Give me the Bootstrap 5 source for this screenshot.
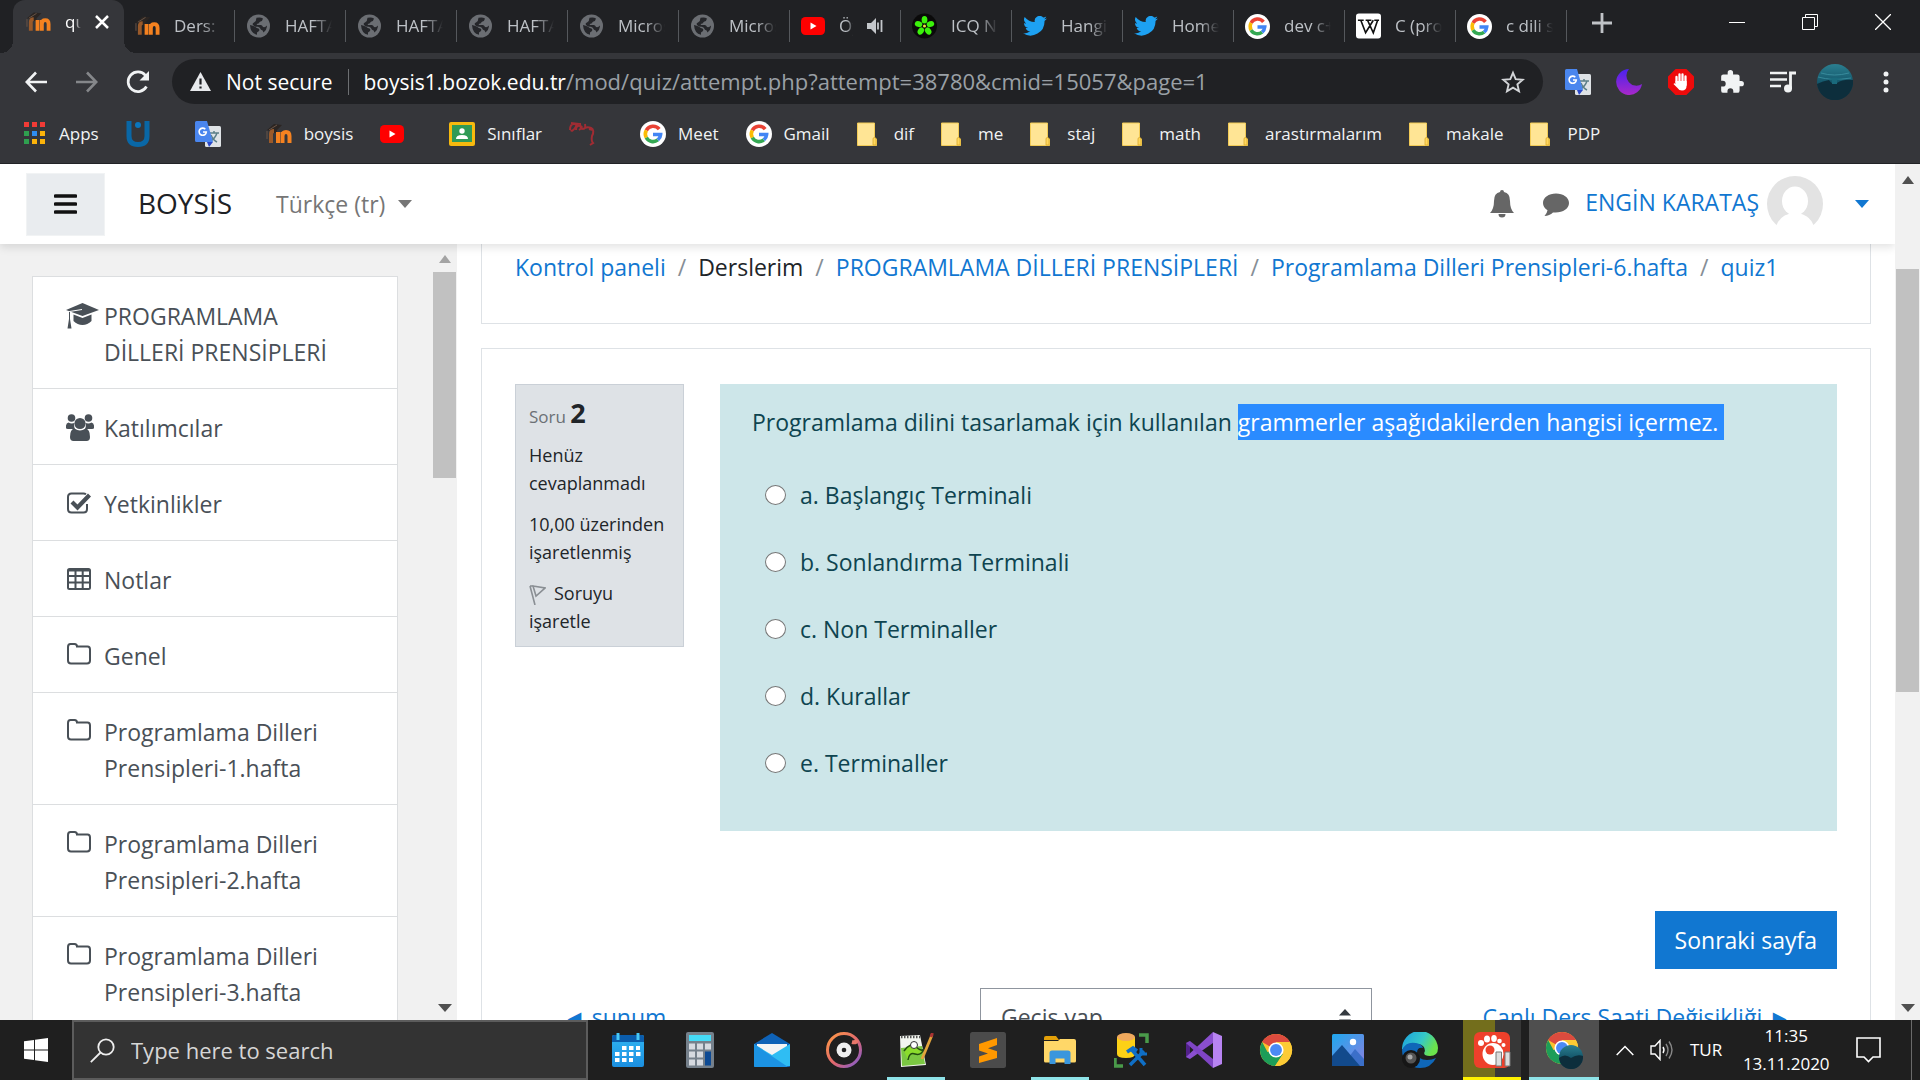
<!DOCTYPE html>
<html lang="tr">
<head>
<meta charset="utf-8">
<meta name="viewport" content="width=device-width, initial-scale=1">
<title>quiz1</title>
<link href="https://cdn.jsdelivr.net/npm/bootstrap@5.3.0/dist/css/bootstrap.min.css" rel="stylesheet">
<style>
:root { --ink:#373a3c; --link:#1177d1; --line:#dee2e6; --chrome:#35363a; --strip:#202124; }
body { font-family:"Open Sans","Noto Sans",sans-serif; font-size:23px; line-height:36px; color:#212529; }
a { text-decoration:none; color:var(--link); }
svg { display:block; flex:none; }
.plain { background:none; border:0; padding:0; color:inherit; display:flex; align-items:center; justify-content:center; }

/* browser tabs */
.tabstrip { height:53px; background:var(--strip); color:#bdc1c6; font-size:17px; line-height:24px; padding-left:13px; }
.tab-item { width:111px; height:32px; margin-top:10px; padding-left:11px; gap:14px; border-right:1px solid #55585c; color:inherit; }
.tab-text { width:47px; overflow:hidden; white-space:nowrap; -webkit-mask-image:linear-gradient(90deg,#000 60%,transparent); mask-image:linear-gradient(90deg,#000 60%,transparent); }
.tab-text.short { width:14px; }
.tab-current { position:relative; height:53px; margin:0; padding:0 12px 10px 13px; border:0; background:var(--chrome); border-radius:12px 12px 0 0; color:#fff; }
.tab-current .tab-text { width:16px; }
.tab-current::before, .tab-current::after { content:""; position:absolute; bottom:0; width:12px; height:12px; }
.tab-current::before { left:-12px; background:radial-gradient(circle at 0 0,transparent 12px,var(--chrome) 12px); }
.tab-current::after { right:-12px; background:radial-gradient(circle at 100% 0,transparent 12px,var(--chrome) 12px); }
.tab-new { width:38px; }
.win-buttons { width:220px; height:44px; color:#fff; }

/* address row */
.toolbar { height:57px; background:var(--chrome); color:#fff; padding-left:10px; }
.nav-btn { width:51px; height:40px; }
.omnibox { height:45px; margin:0 9px; padding:0 18px; border-radius:23px; background:var(--strip); font-size:21px; line-height:30px; gap:15px; white-space:nowrap; }
.omnibox .rule { width:1px; height:26px; background:#6d6f72; }
.omnibox .path { color:#9aa0a6; font-size:22px; }
.ext-group { width:360px; margin-right:8px; }
.ext-group .plain { flex:1 1 0; }

/* bookmarks */
.bookmarks { height:54px; background:var(--chrome); border-bottom:1px solid #222326; font-size:17px; line-height:24px; padding:0 0 6px 23px; gap:27px; }
.bookmarks a { color:#f1f3f4; gap:12px; white-space:nowrap; }
.bookmarks .only-icon { padding-right:18px; }

/* site header */
.site-header { position:relative; z-index:2; height:80px; background:#fff; box-shadow:0 3px 9px rgba(0,0,0,.12); padding:0 26px; }
.menu-btn { width:79px; height:63px; background:#e9ecef; border:1px solid #f1f3f4; border-radius:0; padding:0; display:flex; align-items:center; justify-content:center; }
.site-name { font-size:28px; color:#1d2125; margin:0 0 0 33px; }
.lang-link { color:#767676; margin-left:44px; gap:13px; }
.user-link .tri { margin-left:32px; }
.tri { width:0; height:0; border:7px solid transparent; border-bottom:0; border-top:8px solid currentColor; }
.tri-up { width:0; height:0; border:6px solid transparent; border-top:0; border-bottom:8px solid currentColor; }

/* side drawer */
.drawer { width:457px; background:#f1f1f1; }
.drawer-list { width:366px; margin:32px 0 0 32px; --bs-list-group-border-radius:0; --bs-list-group-border-color:#dcdee0; }
.drawer-list .list-group-item { display:flex; padding:21px 30px 18px 33px; color:#495057; }
.drawer-list .ico-box { width:38px; flex:none; padding-top:4px; }
.scroll-col { width:25px; background:#f1f1f1; color:#505050; }
.scroll-col .thumb { align-self:stretch; background:#c1c1c1; margin:0 1px; }
.drawer .thumb { height:206px; margin-top:9px; }
.drawer .tri-up { color:#a3a3a3; margin-top:11px; }
.page-scroll .thumb { height:423px; margin-top:85px; }

/* content */
.content-area { padding:0 24px; background:#fff; }
.panel { border:1px solid var(--line); border-radius:0; background:#fff; }
.crumb-panel { height:80px; padding:5px 33px; border-top:0; margin-bottom:24px; }
.breadcrumb { --bs-breadcrumb-item-padding-x:12px; --bs-breadcrumb-divider-color:#868e96; }
.quiz-panel { padding:35px 33px; }
.info-box { width:169px; background:#dee2e6; border:1px solid #cad0d7; padding:10px 13px 11px; font-size:18px; line-height:28px; gap:13px; color:#212529; }
.info-box .q-label { font-size:17px; line-height:36px; color:#6b7075; margin:0 0 -7px; }
.info-box .q-label b { font-size:27px; color:#212529; }
.question { background:#cde6e9; color:#0e4450; margin-left:36px; height:447px; padding:20px 32px; }
.question p { margin:0 0 37px; }
.picked { background:#2a8bff; color:#fff; display:inline-block; padding-right:6px; }
.answer { gap:14px; padding-left:13px; margin-bottom:31px; display:flex; align-items:center; }
.answer input { width:21px; height:20px; margin:0; flex:none; appearance:none; border:1px solid #767676; border-radius:50%; background:#fff; }
.answer input:checked { box-shadow:inset 0 0 0 4px #fff; background:var(--link); }
.btn-next { background:var(--link); color:#fff; border:0; border-radius:0; font-size:23px; line-height:36px; padding:11px 20px; margin:80px 0 19px; height:58px; }
.jump { appearance:none; width:392px; height:58px; border:1px solid #8f959e; color:#495057; padding:0 20px; font-size:23px; border-radius:0; background:#fff url("data:image/svg+xml,%3Csvg xmlns='http://www.w3.org/2000/svg' viewBox='0 0 12 17'%3E%3Cpath fill='%23343a40' d='M0 6.500 6 0l6 6.500zM0 10.500 6 17l6-6.500z'/%3E%3C/svg%3E") no-repeat right 20px center / 12px 17px; }
.foot-nav .prev { padding-left:48px; }
.foot-nav .next { padding-right:46px; }

/* taskbar */
.taskbar { height:60px; background:#1f1f1f; color:#fff; position:relative; z-index:3; }
.task-start { width:72px; flex:none; }
.task-search { width:516px; flex:none; background:#333; border:2px solid #5c5c5c; padding-left:16px; gap:16px; margin-right:4px; }
.task-search input { background:none; border:0; outline:0; color:#ddd; font-size:22px; padding:0; width:400px; }
.task-search input::placeholder { color:#d6d6d6; opacity:1; }
.task-app { width:72px; flex:none; border-bottom:3px solid transparent; padding-top:2px; }
.task-app.open { width:58px; margin:0 7px; border-color:#8ee3e8; }
.task-app.alerting { border-color:#fff200; background:linear-gradient(90deg,#736e1c 56%,#373737 56%); }
.task-app.current { width:70px; margin:0 1px; background:#4f4f4f; }
.tray { font-size:17px; line-height:28px; }
.tray .clock { width:112px; text-align:center; }
.tray .edge-line { width:1px; background:#6a6a6a; margin-left:29px; }
</style>
</head>
<body class="d-flex flex-column vh-100 overflow-hidden">

<svg width="0" height="0" class="position-absolute" aria-hidden="true">
  <defs>
    <linearGradient id="gMoon" x1="0" y1="0" x2="0" y2="1"><stop offset="0" stop-color="#4a22ee"/><stop offset="1" stop-color="#a928c9"/></linearGradient>
    <linearGradient id="gSea" x1="0" y1="0" x2="0" y2="1"><stop offset="0" stop-color="#2b7f90"/><stop offset=".5" stop-color="#15586c"/><stop offset="1" stop-color="#0c3444"/></linearGradient>
    <linearGradient id="gRing" x1="0" y1="0" x2="1" y2="1"><stop offset="0" stop-color="#ff9a44"/><stop offset=".55" stop-color="#e0676f"/><stop offset="1" stop-color="#7a5bd6"/></linearGradient>
    <linearGradient id="gEdge" x1="0" y1="0" x2="1" y2=".4"><stop offset="0" stop-color="#1a9fe0"/><stop offset=".6" stop-color="#35c8c8"/><stop offset="1" stop-color="#6be34c"/></linearGradient>
    <linearGradient id="gCal" x1="0" y1="0" x2="0" y2="1"><stop offset="0" stop-color="#2fb4f2"/><stop offset="1" stop-color="#1b8fe0"/></linearGradient>
    <linearGradient id="gPic" x1="0" y1="0" x2="1" y2="1"><stop offset="0" stop-color="#1ea8ee"/><stop offset="1" stop-color="#8b7fe0"/></linearGradient>
  </defs>
  <symbol id="moodle" viewBox="0 0 26 24"><path d="M1 8 8 2l8 1-5 5v3H4V9z" fill="#2b2522"/><path d="M1 9v8M3 8l8-5" stroke="#6b5547" stroke-width="1"/><path d="M5 21V12q0-3 3-3" stroke="#9a5a2a" stroke-width="4" fill="none"/><path d="M12 21V10M16.500 21V10M16.500 14q0-4 3.500-4t3.500 4v7" stroke="#f58220" stroke-width="4" fill="none"/></symbol>
  <symbol id="globe" viewBox="0 0 24 24"><circle cx="12" cy="12" r="11.500" fill="#6b6e73"/><path d="M3.500 11q3 .5 5.500 2 1 1 3 1.500 1.500 1 .5 2.500l-2 1.500v2.300Q4 19.500 3.500 11zM10 3.800q4-1 6.500.7-.5 2.500-2.500 3-1.500.5-1.500 1.800-2 .2-2.500 1.700h4.500q1.500.5 2 2 2.500.5 3.500-1 .3-1 .5.500-.5 4-3.500 6-.5-2.500-2.500-2.700-1-2.300-3-3-3 .2-4.500-1.300Q5 9.500 7.500 8.500 10 7 10 3.800z" fill="#25262a"/></symbol>
  <symbol id="yt" viewBox="0 0 24 18"><rect width="24" height="18" rx="4.500" fill="#f00"/><path d="m9.500 5.500 6 3.500-6 3.500z" fill="#fff"/></symbol>
  <symbol id="bird" viewBox="0 0 24 20"><path d="M24 2.400a9.800 9.800 0 0 1-2.800.8A4.900 4.900 0 0 0 23.300.4a9.900 9.900 0 0 1-3.100 1.200 4.900 4.900 0 0 0-8.400 4.500A14 14 0 0 1 1.700.9a4.900 4.900 0 0 0 1.500 6.600 4.900 4.900 0 0 1-2.200-.6 4.900 4.900 0 0 0 3.900 4.900 4.900 4.900 0 0 1-2.200.1 4.900 4.900 0 0 0 4.600 3.400A9.900 9.900 0 0 1 0 17.300a14 14 0 0 0 21.500-12.400A10 10 0 0 0 24 2.400z" fill="#1da1f2"/></symbol>
  <symbol id="goog" viewBox="0 0 26 26"><circle cx="13" cy="13" r="13" fill="#fff"/><g fill="none" stroke-width="3.600"><path d="M19.200 8.200A7.700 7.700 0 0 0 6.300 9.300" stroke="#ea4335"/><path d="M6.300 9.300a7.700 7.700 0 0 0 0 7.400" stroke="#fbbc05"/><path d="M6.300 16.700a7.700 7.700 0 0 0 11.500 2.200" stroke="#34a853"/><path d="M17.800 18.900a7.700 7.700 0 0 0 2.800-5.400H13" stroke="#4285f4"/></g></symbol>
  <symbol id="trans" viewBox="0 0 26 26"><rect x="10" y="5" width="16" height="21" rx="1.500" fill="#dfe3e6"/><path d="M14 12h10M19 10v2M22 12q-2 6-7 8M16 14q2 5 6 7" stroke="#5c7f87" stroke-width="1.500" fill="none"/><path d="M1.500 0H12l6 21H1.500A1.500 1.500 0 0 1 0 19.500v-18A1.500 1.500 0 0 1 1.500 0z" fill="#4a86ee"/><path d="M12 21h6l-4 5z" fill="#2a48c8"/><path d="M10.300 8.200a3.600 3.600 0 1 0 1 2.800H8" fill="none" stroke="#fff" stroke-width="1.600"/></symbol>
  <symbol id="fold" viewBox="0 0 20 24" preserveAspectRatio="xMinYMid"><path d="M.5 1h17v15l2 1v6.500H.5z" fill="#ffe595" stroke="#f2cb56"/><path d="M16 23v-6q0-1.500 1.500-1.500T19 17v6z" fill="#ffd75e" stroke="#dba92c" stroke-width=".8"/></symbol>
  <symbol id="chromeLogo" viewBox="0 0 36 36"><circle cx="18" cy="18" r="17" fill="#fbc02d"/><path d="M18 18 3.300 9.500A17 17 0 0 1 32.700 9.500H18z" fill="#dc4b3e"/><path d="M3.300 9.500A17 17 0 0 0 17 35l8.500-12.500L18 18 9 20z" fill="#1d9d58"/><path d="M18 9.500h14.700A17 17 0 0 1 17 35l8.500-13z" fill="#fdcb35"/><circle cx="18" cy="18" r="8" fill="#fff"/><circle cx="18" cy="18" r="6.300" fill="#4b8af5"/></symbol>
  <symbol id="dirOutline" viewBox="0 0 26 26"><path d="M2 5q0-3 2.500-3h4Q11 2 11 4.500h10.500q2.500 0 2.500 3V18.500q0 3-3 3H5q-3 0-3-3z" fill="none" stroke="#495057" stroke-width="2"/></symbol>
</svg>

<!-- tabs -->
<div class="tabstrip d-flex flex-shrink-0">
  <a href="#" class="tab-item tab-current d-flex align-items-center"><svg width="25" height="24"><use href="#moodle"/></svg><span class="tab-text">quiz1</span><svg width="14" height="14" viewBox="0 0 14 14"><path d="m1 1 12 12M13 1 1 13" stroke="#fff" stroke-width="2.500"/></svg></a>
  <a href="#" class="tab-item d-flex align-items-center"><svg width="25" height="24"><use href="#moodle"/></svg><span class="tab-text">Ders: PR</span></a>
  <a href="#" class="tab-item d-flex align-items-center"><svg width="25" height="24"><use href="#globe"/></svg><span class="tab-text">HAFTA 1</span></a>
  <a href="#" class="tab-item d-flex align-items-center"><svg width="25" height="24"><use href="#globe"/></svg><span class="tab-text">HAFTA 2</span></a>
  <a href="#" class="tab-item d-flex align-items-center"><svg width="25" height="24"><use href="#globe"/></svg><span class="tab-text">HAFTA 3</span></a>
  <a href="#" class="tab-item d-flex align-items-center"><svg width="25" height="24"><use href="#globe"/></svg><span class="tab-text">Microsoft</span></a>
  <a href="#" class="tab-item d-flex align-items-center"><svg width="25" height="24"><use href="#globe"/></svg><span class="tab-text">Microsoft</span></a>
  <a href="#" class="tab-item d-flex align-items-center"><svg width="24" height="18"><use href="#yt"/></svg><span class="tab-text short">Öy</span><svg width="17" height="16" viewBox="0 0 17 16"><path d="M0 5h4l5-5v16l-5-5H0z" fill="#c4c7cb"/><path d="M11 4.500v7M14.500 2v12" stroke="#c4c7cb" stroke-width="1.800"/></svg></a>
  <a href="#" class="tab-item d-flex align-items-center"><svg width="25" height="26" viewBox="0 0 26 26"><circle cx="13" cy="13" r="13" fill="#0a0a0a"/><g fill="#3bf20b"><ellipse cx="13" cy="6.500" rx="3" ry="4"/><ellipse cx="13" cy="6.500" rx="3" ry="4" transform="rotate(72 13 13)"/><ellipse cx="13" cy="6.500" rx="3" ry="4" transform="rotate(144 13 13)"/><ellipse cx="13" cy="6.500" rx="3" ry="4" transform="rotate(216 13 13)"/><ellipse cx="13" cy="6.500" rx="3" ry="4" transform="rotate(288 13 13)"/></g><circle cx="13" cy="13" r="1.600" fill="#e8e53a"/></svg><span class="tab-text">ICQ New</span></a>
  <a href="#" class="tab-item d-flex align-items-center"><svg width="24" height="20"><use href="#bird"/></svg><span class="tab-text">Hangisi</span></a>
  <a href="#" class="tab-item d-flex align-items-center"><svg width="24" height="20"><use href="#bird"/></svg><span class="tab-text">Home /</span></a>
  <a href="#" class="tab-item d-flex align-items-center"><svg width="25" height="25"><use href="#goog"/></svg><span class="tab-text">dev c++</span></a>
  <a href="#" class="tab-item d-flex align-items-center"><svg width="25" height="26" viewBox="0 0 26 26"><rect width="26" height="26" rx="3" fill="#fff"/><path d="M2 7h6M10 7h6M19 7h5M5 7l5 13L18 7M12 7l6 13 4.500-13" fill="none" stroke="#111" stroke-width="1.700"/></svg><span class="tab-text">C (progr</span></a>
  <a href="#" class="tab-item d-flex align-items-center"><svg width="25" height="25"><use href="#goog"/></svg><span class="tab-text">c dili se</span></a>
  <button class="plain tab-new ms-3" type="button" aria-label="New tab"><svg width="20" height="20" viewBox="0 0 20 20" class="mb-2"><path d="M10 0v20M0 10h20" stroke="#c0c3c7" stroke-width="2.800"/></svg></button>
  <div class="win-buttons d-flex ms-auto">
    <button class="plain flex-fill" type="button" aria-label="Minimize"><svg width="16" height="16"><path d="M0 8.500h16" stroke="#fff" /></svg></button>
    <button class="plain flex-fill" type="button" aria-label="Restore"><svg width="16" height="16"><path d="M.5 3.500h12v12H.5zM3.500 3.500v-3h12v12h-3" fill="none" stroke="#fff"/></svg></button>
    <button class="plain flex-fill" type="button" aria-label="Close"><svg width="16" height="16"><path d="m0 0 16 16M16 0 0 16" stroke="#fff" stroke-width="1.300"/></svg></button>
  </div>
</div>

<!-- address bar -->
<div class="toolbar d-flex align-items-center flex-shrink-0">
  <button class="plain nav-btn" type="button" aria-label="Back"><svg width="22" height="22" viewBox="0 0 22 22"><path d="M22 11H2.500M11 1.500 1.800 11l9.200 9.500" fill="none" stroke="#f1f3f4" stroke-width="2.600"/></svg></button>
  <button class="plain nav-btn" type="button" aria-label="Forward"><svg width="22" height="22" viewBox="0 0 22 22"><path d="M0 11h19.500M11 1.500l9.200 9.500-9.200 9.500" fill="none" stroke="#85878a" stroke-width="2.600"/></svg></button>
  <button class="plain nav-btn" type="button" aria-label="Reload"><svg width="24" height="24" viewBox="0 0 24 24"><path d="M20.500 16.500A9.800 9.800 0 1 1 19.500 5.500" fill="none" stroke="#f1f3f4" stroke-width="2.700"/><path d="M23 1v9.500h-9.500z" fill="#f1f3f4"/></svg></button>
  <div class="omnibox d-flex align-items-center flex-grow-1">
    <svg width="21" height="19" viewBox="0 0 21 19"><path d="M10.500 0 21 19H0z" fill="#e8eaed"/><path d="M10.500 6.500v6M10.500 14.500v2" stroke="#202124" stroke-width="2.200"/></svg>
    <span>Not secure</span><span class="rule"></span>
    <span>boysis1.bozok.edu.tr<span class="path">/mod/quiz/attempt.php?attempt=38780&amp;cmid=15057&amp;page=1</span></span>
    <button class="plain ms-auto" type="button" aria-label="Bookmark"><svg width="24" height="24" viewBox="0 0 24 24"><path d="m12 2.800 2.700 6.400 7 .6-5.300 4.600 1.600 6.800-6-3.600-6 3.600 1.600-6.800-5.300-4.600 7-.6z" fill="none" stroke="#d3d5d8" stroke-width="1.900"/></svg></button>
  </div>
  <div class="ext-group d-flex flex-shrink-0">
    <button class="plain" type="button" aria-label="Translate"><svg width="26" height="26"><use href="#trans"/></svg></button>
    <button class="plain" type="button" aria-label="Dark mode"><svg width="26" height="26" viewBox="0 0 26 26"><path d="M13 0A13 13 0 1 0 26 15 10 10 0 0 1 13 0z" fill="url(#gMoon)"/></svg></button>
    <button class="plain" type="button" aria-label="Blocker"><svg width="26" height="26" viewBox="0 0 26 26"><path d="M7.600 0h10.800L26 7.600v10.800L18.400 26H7.600L0 18.400V7.600z" fill="#ee0b0b"/><path d="M8.500 8v6M11.500 5.500v9M14.500 5.500V15M17.500 7.500V16" stroke="#fff" stroke-width="2.300" stroke-linecap="round"/><path d="M7.400 12h11.200v4.500q0 5-4.600 5-3 0-4.500-2.500L5.500 15q1-1.500 2.500 0z" fill="#fff"/></svg></button>
    <button class="plain" type="button" aria-label="Extensions"><svg width="26" height="26" viewBox="0 0 24 24"><path d="M20.500 11H19V7a2 2 0 0 0-2-2h-4V3.500a2.500 2.500 0 0 0-5 0V5H4a2 2 0 0 0-2 2v3.800h1.500a2.700 2.700 0 0 1 0 5.400H2V20a2 2 0 0 0 2 2h3.800v-1.500a2.700 2.700 0 0 1 5.400 0V22H17a2 2 0 0 0 2-2v-4h1.500a2.500 2.500 0 0 0 0-5z" fill="#f1f3f4"/></svg></button>
    <button class="plain" type="button" aria-label="Media"><svg width="26" height="22" viewBox="0 0 26 22"><path d="M0 2h17M0 8.500h17M0 15h11" stroke="#f1f3f4" stroke-width="2.600"/><path d="M20.500 18V2H26" stroke="#f1f3f4" stroke-width="2.800" fill="none"/><circle cx="18" cy="17.500" r="4" fill="#f1f3f4"/></svg></button>
    <button class="plain" type="button" aria-label="Profile"><svg width="36" height="36" viewBox="0 0 36 36"><circle cx="18" cy="18" r="18" fill="url(#gSea)"/><path d="M0 20q6-3 12-4 3 5 8 3 6-4 16-3a18 18 0 0 1-36 4z" fill="#0d2e3c"/><path d="M4 9q13 4 28 0M1 13q14 4 33 1" stroke="#3d93a3" stroke-width=".8" fill="none"/><path d="M11 15q7-3 14 0l-5 1v4h-5v-4z" fill="#1a6a7c"/></svg></button>
    <button class="plain" type="button" aria-label="Menu"><svg width="36" height="22" viewBox="0 0 36 22"><g fill="#f1f3f4"><circle cx="18" cy="3" r="2.500"/><circle cx="18" cy="11" r="2.500"/><circle cx="18" cy="19" r="2.500"/></g></svg></button>
  </div>
</div>

<!-- bookmarks -->
<div class="bookmarks d-flex align-items-center flex-shrink-0">
  <a href="#" class="d-flex align-items-center"><svg width="24" height="23" viewBox="0 0 24 23"><path d="M1 0h5v5H1zM9 0h5v5H9zM17 0h5v5h-5z" fill="#f23b36"/><path d="M1 9h5v5H1zM1 17h5v5H1z" fill="#2fa04f"/><path d="M9 9h5v5H9z" fill="#2f8df0"/><path d="M17 9h5v5h-5zM9 17h5v5H9zM17 17h5v5h-5z" fill="#fbb30a"/></svg>Apps</a>
  <a href="#" class="only-icon" aria-label="U"><svg width="24" height="26" viewBox="0 0 24 26"><path d="M3 0v15q0 8.500 9 8.500t9-8.500V0" stroke="#0967a6" stroke-width="5" fill="none"/><circle cx="12" cy="4" r="3" fill="#0a76bd"/></svg></a>
  <a href="#" class="only-icon" aria-label="Translate"><svg width="26" height="26"><use href="#trans"/></svg></a>
  <a href="#" class="d-flex align-items-center"><svg width="26" height="24"><use href="#moodle"/></svg>boysis</a>
  <a href="#" class="only-icon" aria-label="YouTube"><svg width="24" height="18"><use href="#yt"/></svg></a>
  <a href="#" class="d-flex align-items-center"><svg width="26" height="24" viewBox="0 0 26 24"><rect width="26" height="24" rx="2" fill="#f6b90e"/><rect x="3" y="3" width="20" height="17" fill="#2f9a55"/><circle cx="13" cy="9" r="2.700" fill="#fff"/><path d="M7 17q0-4 6-4t6 4z" fill="#fff"/></svg>Sınıflar</a>
  <a href="#" class="only-icon" aria-label="Sketch"><svg width="26" height="26" viewBox="0 0 26 26"><path d="M1 9q0-6 4-6t1 4-4 2M2 2l8 1M7 9q0-5 4-4t-1 4M11 2q0 6 3 6t2-5M14 8q4-3 8-1t1 8q-1 5 1 7l-3 2M20 8l4 1" fill="none" stroke="#a02c33" stroke-width="2"/></svg></a>
  <a href="#" class="d-flex align-items-center"><svg width="26" height="26"><use href="#goog"/></svg>Meet</a>
  <a href="#" class="d-flex align-items-center"><svg width="26" height="26"><use href="#goog"/></svg>Gmail</a>
  <a href="#" class="d-flex align-items-center"><svg width="25" height="24"><use href="#fold"/></svg>dif</a>
  <a href="#" class="d-flex align-items-center"><svg width="25" height="24"><use href="#fold"/></svg>me</a>
  <a href="#" class="d-flex align-items-center"><svg width="25" height="24"><use href="#fold"/></svg>staj</a>
  <a href="#" class="d-flex align-items-center"><svg width="25" height="24"><use href="#fold"/></svg>math</a>
  <a href="#" class="d-flex align-items-center"><svg width="25" height="24"><use href="#fold"/></svg>arastırmalarım</a>
  <a href="#" class="d-flex align-items-center"><svg width="25" height="24"><use href="#fold"/></svg>makale</a>
  <a href="#" class="d-flex align-items-center"><svg width="25" height="24"><use href="#fold"/></svg>PDP</a>
</div>

<div class="d-flex flex-grow-1 overflow-hidden">
  <div class="d-flex flex-column flex-grow-1 overflow-hidden">
    <header class="site-header d-flex align-items-center flex-shrink-0">
      <button class="menu-btn" type="button" aria-label="Menu"><svg width="23" height="20" viewBox="0 0 23 20"><path d="M1.500 2h20M1.500 10h20M1.500 18h20" stroke="#111" stroke-width="3.600" stroke-linecap="round"/></svg></button>
      <h1 class="site-name fw-normal">BOYSİS</h1>
      <a href="#" class="lang-link d-flex align-items-center">Türkçe (tr)<span class="tri"></span></a>
      <div class="ms-auto d-flex align-items-center">
        <a href="#" class="me-4" aria-label="Notifications"><svg width="34" height="28" viewBox="0 0 34 28"><path d="M17 0q2 0 2 2 6 1 6 9 0 8 4 12H5q4-4 4-12 0-8 6-9 0-2 2-2zM13.500 24h7q0 3.500-3.500 3.500T13.500 24z" fill="#666"/></svg></a>
        <a href="#" class="me-3" aria-label="Messages"><svg width="26" height="26" viewBox="0 0 26 26"><path d="M13 2.500C5.800 2.500 0 6.500 0 12q0 4.500 4.500 7.300Q4 22.500 1.500 25q5-.3 8.500-3.600c9 1 16-3.400 16-9.400 0-5.500-5.800-9.500-13-9.500z" fill="#666"/></svg></a>
        <a href="#" class="user-link d-flex align-items-center"><span class="pb-1 me-2">ENGİN KARATAŞ</span><svg width="56" height="56" viewBox="0 0 56 56"><circle cx="28" cy="28" r="28" fill="#e3e3e3"/><ellipse cx="28" cy="25" rx="13" ry="14.500" fill="#fff"/><path d="M8 56q2-18 20-19 18 1 20 19z" fill="#fff"/></svg><span class="tri"></span></a>
      </div>
    </header>

    <div class="d-flex flex-grow-1 overflow-hidden">
      <aside class="drawer d-flex flex-shrink-0">
        <nav class="list-group drawer-list">
          <a href="#" class="list-group-item"><span class="ico-box"><svg width="34" height="28" viewBox="0 0 34 28"><path d="M16.500 1 33 8l-16.500 6L0 8z" fill="#495057"/><path d="M7.500 12.500 16.500 16l9-3.500V19q-4 4-9 4t-9-4z" fill="#495057"/><path d="M3.500 9.500 16 7.500" stroke="#fff"/><path d="M4 10v7l1.500 9.500h-4L3 17v-7z" fill="#495057"/></svg></span><span>PROGRAMLAMA<br>DİLLERİ PRENSİPLERİ</span></a>
          <a href="#" class="list-group-item"><span class="ico-box"><svg width="28" height="27" viewBox="0 0 28 27"><g fill="#495057"><circle cx="5.500" cy="4" r="3.800"/><circle cx="22.500" cy="4" r="3.800"/><path d="M0 14q-.5-5 2.500-5.500 2.500 1.500 6 .5-1 3 .5 6H2q-2 0-2-1zM28 14q.5-5-2.500-5.500-2.500 1.500-6 .5 1 3-.5 6h7q2 0 2-1z"/><circle cx="14" cy="9.500" r="5.600"/><path d="M4 23q0-8 4.500-8.500 5.500 4 11 0Q24 15 24 23q0 4-3.500 4h-13Q4 27 4 23z"/></g></svg></span>Katılımcılar</a>
          <a href="#" class="list-group-item"><span class="ico-box"><svg width="26" height="26" viewBox="0 0 26 26"><path d="M21 14v5q0 3.500-3.500 3.500h-12Q2 22.500 2 19V7q0-3.500 3.500-3.500h12q1.500 0 2.500.7" fill="none" stroke="#495057" stroke-width="2"/><path d="m6 12 5.500 5.500L23.500 5" fill="none" stroke="#495057" stroke-width="4.200"/></svg></span>Yetkinlikler</a>
          <a href="#" class="list-group-item"><span class="ico-box"><svg width="26" height="26" viewBox="0 0 26 26"><path d="M2 4.500q0-1.500 1.500-1.500h19Q24 3 24 4.500v17q0 1.500-1.500 1.500h-19Q2 23 2 21.500zM2 10h22M2 16.500h22M9.500 4v19M16.700 4v19" fill="none" stroke="#495057" stroke-width="2"/><path d="M2 4.500h22" stroke="#495057" stroke-width="2"/></svg></span>Notlar</a>
          <a href="#" class="list-group-item"><span class="ico-box"><svg width="26" height="26"><use href="#dirOutline"/></svg></span>Genel</a>
          <a href="#" class="list-group-item"><span class="ico-box"><svg width="26" height="26"><use href="#dirOutline"/></svg></span><span>Programlama Dilleri Prensipleri-1.hafta</span></a>
          <a href="#" class="list-group-item"><span class="ico-box"><svg width="26" height="26"><use href="#dirOutline"/></svg></span><span>Programlama Dilleri Prensipleri-2.hafta</span></a>
          <a href="#" class="list-group-item"><span class="ico-box"><svg width="26" height="26"><use href="#dirOutline"/></svg></span><span>Programlama Dilleri Prensipleri-3.hafta</span></a>
        </nav>
        <div class="scroll-col d-flex flex-column align-items-center ms-auto pb-2"><span class="tri-up"></span><span class="thumb"></span><span class="tri mt-auto"></span></div>
      </aside>

      <main class="content-area flex-grow-1">
        <div class="panel crumb-panel">
          <ol class="breadcrumb m-0 flex-nowrap text-nowrap">
            <li class="breadcrumb-item"><a href="#">Kontrol paneli</a></li>
            <li class="breadcrumb-item">Derslerim</li>
            <li class="breadcrumb-item"><a href="#">PROGRAMLAMA DİLLERİ PRENSİPLERİ</a></li>
            <li class="breadcrumb-item"><a href="#">Programlama Dilleri Prensipleri-6.hafta</a></li>
            <li class="breadcrumb-item"><a href="#">quiz1</a></li>
          </ol>
        </div>
        <div class="panel quiz-panel">
          <div class="d-flex align-items-start">
            <section class="info-box d-flex flex-column flex-shrink-0">
              <h2 class="q-label fw-normal">Soru <b>2</b></h2>
              <div>Henüz cevaplanmadı</div>
              <div>10,00 üzerinden işaretlenmiş</div>
              <a href="#" class="text-reset"><svg class="d-inline-block me-2" width="17" height="20" viewBox="0 0 17 20"><path d="m1 1 5 19M4 1l12 2-9 8zM1 1l4 0" fill="none" stroke="#8a8f94" stroke-width="1.600"/></svg>Soruyu işaretle</a>
            </section>
            <section class="question flex-grow-1">
              <p>Programlama dilini tasarlamak için kullanılan <span class="picked">grammerler aşağıdakilerden hangisi içermez.</span></p>
              <label class="answer"><input type="radio" name="answer">a. Başlangıç Terminali</label>
              <label class="answer"><input type="radio" name="answer">b. Sonlandırma Terminali</label>
              <label class="answer"><input type="radio" name="answer">c. Non Terminaller</label>
              <label class="answer"><input type="radio" name="answer">d. Kurallar</label>
              <label class="answer"><input type="radio" name="answer">e. Terminaller</label>
            </section>
          </div>
          <div class="d-flex justify-content-end"><button class="btn-next" type="button">Sonraki sayfa</button></div>
          <div class="row g-0 foot-nav align-items-center">
            <div class="col-4"><a href="#" class="prev">◄ sunum</a></div>
            <div class="col-4 text-center"><select class="jump" aria-label="Geçiş yap"><option>Geçiş yap...</option></select></div>
            <div class="col-4 text-end"><a href="#" class="next">Canlı Ders Saati Değişikliği ►</a></div>
          </div>
        </div>
      </main>
    </div>
  </div>
  <div class="scroll-col page-scroll d-flex flex-column flex-shrink-0 align-items-center py-2"><span class="tri-up mt-1"></span><span class="thumb"></span><span class="tri mt-auto"></span></div>
</div>

<!-- taskbar -->
<footer class="taskbar d-flex flex-shrink-0">
  <button class="plain task-start" type="button" aria-label="Start"><svg width="24" height="24" viewBox="0 0 24 24"><path d="M0 3.300 10 2v9.400H0zM11 1.800 24 0v11.400H11zM0 12.500h10V22L0 20.700zM11 12.500h13V24l-13-1.800z" fill="#fff"/></svg></button>
  <div class="task-search d-flex align-items-center"><svg width="25" height="25" viewBox="0 0 25 25"><circle cx="16" cy="9" r="7.700" fill="none" stroke="#eee" stroke-width="1.800"/><path d="M10.500 14.500.8 24.200" stroke="#eee" stroke-width="1.800"/></svg><input type="text" placeholder="Type here to search" aria-label="Search"></div>
  <button class="plain task-app" type="button" aria-label="Calendar"><svg width="32" height="34" viewBox="0 0 32 34"><rect y="2" width="32" height="32" rx="2" fill="url(#gCal)"/><path d="M0 9V4q0-2 2-2h28q2 0 2 2v5z" fill="#0a5cab"/><path d="M6 0v7M26 0v7" stroke="#47c8f6" stroke-width="3"/><path d="M10 15h18M3 21h26M3 27h18" stroke="#fff" stroke-width="4" stroke-dasharray="4.500 2.500"/></svg></button>
  <button class="plain task-app" type="button" aria-label="Calculator"><svg width="28" height="36" viewBox="0 0 28 36"><rect width="28" height="36" rx="2" fill="#75808b"/><rect x="3" y="3" width="22" height="6" fill="#45dbf7"/><g fill="#d6dae0"><path d="M3 11.500h6v6H3zM11 11.500h6v6h-6zM19 11.500h6v6h-6zM3 19.500h6v6H3zM11 19.500h6v6h-6zM3 27.500h6v6H3zM11 27.500h6v6h-6z"/></g><path d="M19 19.500h6v14h-6z" fill="#0d4a94"/></svg></button>
  <button class="plain task-app" type="button" aria-label="Mail"><svg width="36" height="34" viewBox="0 0 36 34"><path d="M0 11 18 0l18 11v22q0 1-1 1H1q-1 0-1-1z" fill="#0e62b7"/><path d="M3 11h30v12H3z" fill="#f4f4f4"/><path d="M0 11 18 22 36 11v22H0z" fill="#2fbdf3"/><path d="M0 11 34 34H1q-1 0-1-1z" fill="#1c93e3"/></svg></button>
  <button class="plain task-app" type="button" aria-label="Music"><svg width="36" height="36" viewBox="0 0 36 36"><circle cx="18" cy="18" r="16.500" fill="none" stroke="url(#gRing)" stroke-width="3"/><path d="M26 10q4 1 5-2" stroke="#e8776a" stroke-width="4" fill="none"/><circle cx="18" cy="18" r="7.500" fill="#eee"/><circle cx="18" cy="18" r="2.300" fill="#222"/></svg></button>
  <button class="plain task-app open" type="button" aria-label="Notepad++"><svg width="36" height="34" viewBox="0 0 36 34"><path d="M2 3 22 2l6 30-25 2z" fill="#f3f6f0"/><path d="M3 15 24 13l3 18-23 2z" fill="#7bc742"/><path d="M3 4h19" stroke="#555" stroke-width="2.500" stroke-dasharray="1.500 1.500"/><path d="M6 18q6-9 12-4t8 2q-3 7-9 5t-7 6" fill="#8bdc2c" stroke="#234d10" stroke-width="1.500"/><circle cx="16" cy="12" r="3.500" fill="#fff" stroke="#333"/><path d="M34 2 24 26" stroke="#e3a43b" stroke-width="2.800"/><path d="m34.500 0-1.500 4" stroke="#a33" stroke-width="3"/></svg></button>
  <button class="plain task-app" type="button" aria-label="Sublime"><svg width="36" height="36" viewBox="0 0 36 36"><rect width="36" height="36" rx="2.500" fill="#4b4b4b"/><path d="m9 12 18-6v7l-9 3.200 9 3V26L9 31v-6.500l9-3-9-3z" fill="#ff9800"/></svg></button>
  <button class="plain task-app open" type="button" aria-label="Explorer"><svg width="32" height="28" viewBox="0 0 32 28"><path d="M0 2q0-2 2-2h10l3 4H0z" fill="#e3a008"/><path d="M0 5h14l2-2h14q2 0 2 2v20q0 1.500-1.500 1.500h-29Q0 26.500 0 25z" fill="#ffd768"/><path d="M5.500 28V17q0-2.500 2.500-2.500h16q2.500 0 2.500 2.500v11h-6v-5.500h-9V28z" fill="#3a96dd"/></svg></button>
  <button class="plain task-app" type="button" aria-label="Database tools"><svg width="36" height="36" viewBox="0 0 36 36"><path d="M3 5v17q0 4 9 4t9-4V5z" fill="#fcd116"/><ellipse cx="12" cy="5" rx="9" ry="4" fill="#f0a95d"/><path d="M25 3h8v8M1 26v8h8" fill="none" stroke="#4a9a4a" stroke-width="3.500"/><path d="m16 33 14-14M18 18l13 15M13 20l6-4 4 3" stroke="#0f6fc6" stroke-width="3.500" fill="none"/><path d="M27 16v6h6" stroke="#0f6fc6" stroke-width="3" fill="none"/></svg></button>
  <button class="plain task-app" type="button" aria-label="Visual Studio"><svg width="36" height="36" viewBox="0 0 36 36"><path d="m0 11 4-2v18l-4-2z" fill="#52218a"/><path d="M0 25 27 0v11L4 27z" fill="#8a4fcf"/><path d="m0 11 4-2 23 18v9z" fill="#7f45c4"/><path d="m27 0 9 4v28l-9 4z" fill="#b884f2"/></svg></button>
  <button class="plain task-app" type="button" aria-label="Chrome"><svg width="34" height="34"><use href="#chromeLogo"/></svg></button>
  <button class="plain task-app" type="button" aria-label="Photos"><svg width="32" height="32" viewBox="0 0 32 32"><rect width="32" height="32" rx="1.500" fill="url(#gPic)"/><circle cx="21" cy="8" r="3.200" fill="#fff"/><path d="m14 27 9-12 9 10v7H14z" fill="#3b6fc9"/><path d="M0 22 10 11l18 21H0z" fill="#124a8c"/></svg></button>
  <button class="plain task-app" type="button" aria-label="Edge"><svg width="36" height="36" viewBox="0 0 36 36"><path d="M0 18A18 18 0 0 1 36 16q0 8-8 8-8 0-5-5 0-6-7-7Q4 11 0 18z" fill="url(#gEdge)"/><path d="M0 18Q4 9 14 11q6 1 7 5-6-1-6 5 1 7 10 7 5 0 9-2-5 10-16 10A18 18 0 0 1 0 18z" fill="#0f67b8"/><circle cx="9" cy="27" r="9" fill="#161616"/><circle cx="9" cy="26" r="5.500" fill="#555"/><circle cx="8" cy="25" r="2.500" fill="#aaa"/></svg></button>
  <button class="plain task-app open alerting" type="button" aria-label="Recorder"><svg width="38" height="36" viewBox="0 0 38 36"><rect x="1" width="36" height="36" rx="6" fill="#ee402b"/><ellipse cx="20" cy="22" rx="10.500" ry="11" fill="#fff"/><g fill="#fff"><circle cx="8" cy="11" r="3"/><ellipse cx="14" cy="7" rx="3" ry="3.500"/><ellipse cx="21" cy="6.500" rx="2.800" ry="3.500"/><circle cx="26.500" cy="9" r="2.300"/><circle cx="30.500" cy="13" r="2"/></g><circle cx="17" cy="18" r="4.500" fill="#ee402b"/><path d="M23 20h5.500v14H23zM32 20h5v14h-5z" fill="#ddd" stroke="#777"/></svg></button>
  <button class="plain task-app open current" type="button" aria-label="Chrome window"><svg width="38" height="40" viewBox="0 0 38 40"><use href="#chromeLogo" width="34" height="36"/><circle cx="26" cy="27" r="12" fill="url(#gSea)"/><path d="M14 28q6-5 12 0 6-4 12-2a12 12 0 0 1-24 2z" fill="#0d2e3c"/></svg></button>
  <div class="tray d-flex align-items-center align-self-stretch flex-grow-1 ps-3">
    <svg width="18" height="11" viewBox="0 0 18 11" class="me-3"><path d="m.7 10 8.300-8.500 8.300 8.500" fill="none" stroke="#fff" stroke-width="1.500"/></svg>
    <svg width="24" height="22" viewBox="0 0 24 22" class="me-3"><path d="M1 7h4l5-5.500v19L5 15H1z" fill="none" stroke="#fff" stroke-width="1.400"/><path d="M13 8q2 3 0 6" fill="none" stroke="#fff" stroke-width="1.400"/><path d="M16 5q4 6 0 12M19 2.500q6 8.500 0 17" fill="none" stroke="#888" stroke-width="1.400"/></svg>
    <span>TUR</span>
    <div class="clock ms-2">11:35<br>13.11.2020</div>
    <svg class="ms-auto" width="26" height="26" viewBox="0 0 26 26"><path d="M1 1h23v19h-7l-4.500 4.500L8 20H1z" fill="none" stroke="#fff" stroke-width="1.600"/></svg>
    <span class="edge-line align-self-stretch me-2"></span>
  </div>
</footer>
<script src="https://cdn.jsdelivr.net/npm/bootstrap@5.3.0/dist/js/bootstrap.bundle.min.js"></script>
</body>
</html>
